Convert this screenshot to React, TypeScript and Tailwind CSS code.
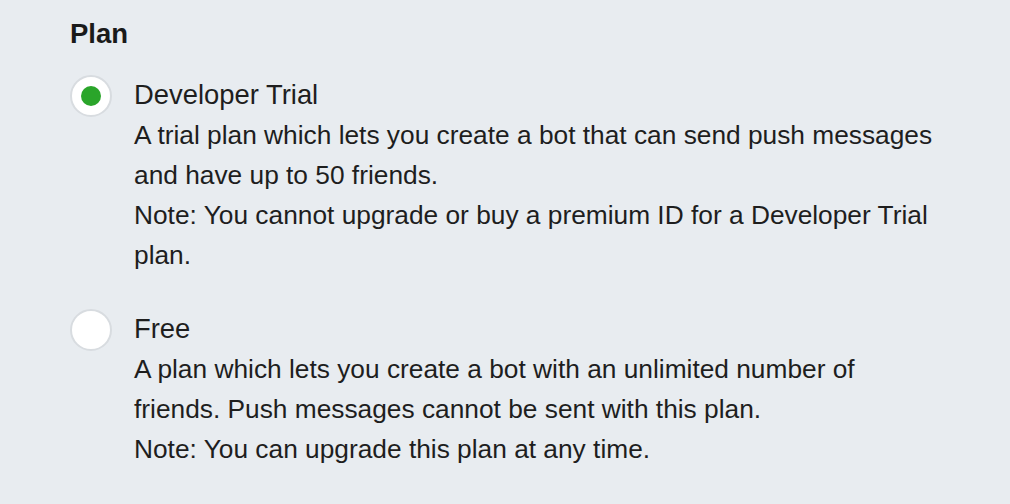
import React from "react";

function Radio({ checked }: { checked: boolean }) {
  return (
    <div className="w-[42px] h-[42px] rounded-full bg-white border-2 border-[#d8dce0] flex items-center justify-center shrink-0">
      {checked && <div className="w-[20px] h-[20px] rounded-full bg-[#2aa52a]" />}
    </div>
  );
}

function Option({ checked, title, lines }: { checked: boolean; title: string; lines: string[] }) {
  return (
    <div className="flex gap-[22px]">
      <div>
        <Radio checked={checked} />
      </div>
      <div className="text-[26.3px] leading-[40px] text-[#1e1e1e]">
        <div className="text-[27.4px]">{title}</div>
        {lines.map((l, i) => (
          <div key={i}>{l}</div>
        ))}
      </div>
    </div>
  );
}

export default function App() {
  return (
    <div
      className="w-[1010px] h-[504px] bg-[#e8ecf0] pl-[70px] pt-[16px]"
      style={{ fontFamily: '"Liberation Sans", Arial, sans-serif' }}
    >
      <div className="text-[27.5px] font-bold leading-[36px] text-[#1a1a1a]">Plan</div>
      <div className="mt-[23px] flex flex-col gap-[34px]">
        <Option
          checked
          title="Developer Trial"
          lines={[
            "A trial plan which lets you create a bot that can send push messages",
            "and have up to 50 friends.",
            "Note: You cannot upgrade or buy a premium ID for a Developer Trial",
            "plan.",
          ]}
        />
        <Option
          checked={false}
          title="Free"
          lines={[
            "A plan which lets you create a bot with an unlimited number of",
            "friends. Push messages cannot be sent with this plan.",
            "Note: You can upgrade this plan at any time.",
          ]}
        />
      </div>
    </div>
  );
}
